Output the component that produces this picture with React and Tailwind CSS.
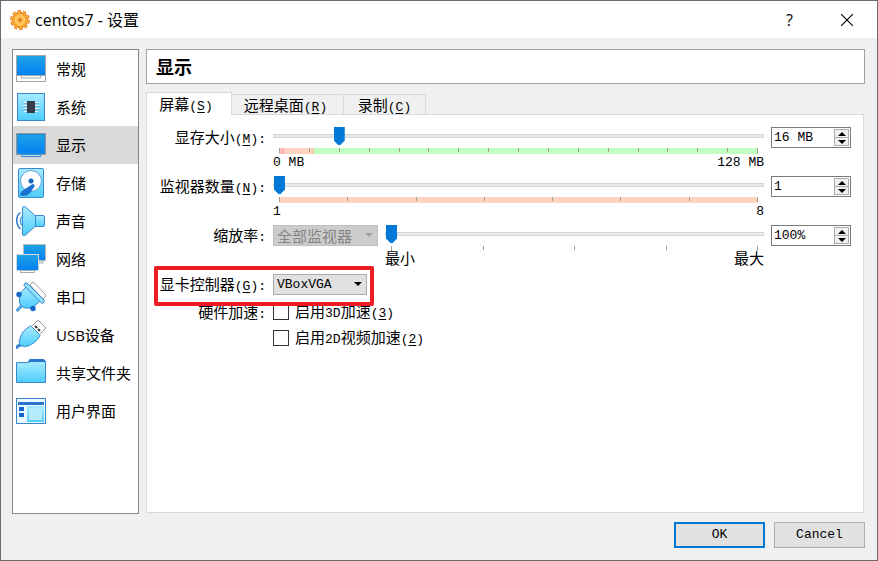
import React, { useState } from "react";

const stroke = "#3a86d0";

function IconFrame({ children }) {
  return (
    <svg viewBox="0 0 30 30" className="size-[30px] shrink-0" aria-hidden="true">
      <defs>
        <linearGradient id="screen" x1="0" y1="0" x2="0" y2="1">
          <stop offset="0" stopColor="#1ea3e2" />
          <stop offset="1" stopColor="#0280f6" />
        </linearGradient>
        <linearGradient id="sky" x1="0" y1="0" x2="0" y2="1">
          <stop offset="0" stopColor="#a8ebff" />
          <stop offset="1" stopColor="#4dcdfb" />
        </linearGradient>
      </defs>
      {children}
    </svg>
  );
}

function GeneralIcon() {
  return (
    <IconFrame>
      <rect x="0.5" y="1.5" width="29" height="26" fill="#fff" stroke="#a3a7ab" />
      <rect x="1" y="2" width="28" height="19" fill="url(#screen)" />
      <path d="M1 21.5h28" stroke="#a3a7ab" />
      <path d="M5.5 22v2h19v-2" fill="none" stroke="#a3a7ab" />
    </IconFrame>
  );
}

function SystemIcon() {
  return (
    <IconFrame>
      <rect x="1.5" y="1.5" width="27" height="27" fill="url(#sky)" stroke={stroke} />
      <path d="M8 10.5h14M7 13.5h16M7 16.5h16M8 19.5h14" stroke="#e5faff" />
      <path d="M8 11.5h14M7 14.5h16M7 17.5h16" stroke="#79aec8" />
      <rect x="11" y="9" width="8" height="12" fill="#373c48" />
    </IconFrame>
  );
}

function DisplayIcon() {
  return (
    <IconFrame>
      <rect x="0.5" y="3.5" width="29" height="21" fill="url(#screen)" stroke="#8c969f" />
      <rect x="1.5" y="4.5" width="27" height="19" fill="none" stroke="#1c8ee0" />
      <path d="M5.5 24.5v2h19v-2z" fill="#bde4fb" stroke={stroke} />
    </IconFrame>
  );
}

function StorageIcon() {
  return (
    <IconFrame>
      <rect x="2.5" y="0.5" width="25" height="29" rx="1.5" fill="url(#sky)" stroke={stroke} />
      <circle cx="15" cy="13" r="10.5" fill="#fff" stroke="#5aa0da" />
      <circle cx="15" cy="13" r="2.5" fill="#1467c0" />
      <path d="M17 16l1.500 2-4 6c-2 3-6 4-10 3 0-3 3-5 5-6z" fill="#1c6fcf" stroke="#1667c0" strokeWidth="0.6" />
    </IconFrame>
  );
}

function SoundIcon() {
  return (
    <IconFrame>
      <path d="M4.500 6.500C-0.500 10-0.500 18 4.500 23" fill="none" stroke="#2b78c8" strokeWidth="1.500" />
      <path d="M6.500 10c-3 2-3 8 0 10" fill="#a8e8ff" stroke="#2b78c8" />
      <path d="M19 9.500h8q1.500 0 1.500 1.500v8q0 1.500-1.500 1.500h-8z" fill="url(#sky)" stroke={stroke} />
      <path d="M6.500 28V2q0-2.500 3-1L19.500 10v10L9.500 29q-3 1.500-3-1z" fill="url(#sky)" stroke={stroke} />
    </IconFrame>
  );
}

function NetworkIcon() {
  return (
    <IconFrame>
      <rect x="7.5" y="0.5" width="22" height="16" fill="url(#screen)" stroke="#b5b9bc" />
      <path d="M22 17h5v2h-5z" fill="#fff" stroke="#a7abae" />
      <rect x="0.5" y="10.5" width="22" height="16" fill="url(#screen)" stroke="#d5d9dc" />
      <path d="M4.5 26.5v2h14v-2z" fill="#fff" stroke="#a7abae" />
    </IconFrame>
  );
}

function SerialIcon() {
  return (
    <IconFrame>
      <path d="M14 3l1.500-2q1.500-1 3 0l10.500 11q1 1.500 0 3l-2 2z" fill="#fff" stroke="#9a9a9a" />
      <path d="M0.500 29l6-6" stroke={stroke} strokeWidth="3" />
      <path d="M0.500 29l6-6" stroke="#8fdeff" />
      <path d="M10 5L3.500 12v8q0 2 2 4t4 2h7L25 18z" fill="url(#sky)" stroke={stroke} />
      <path d="M8 3.500q0-3 3-2.500l17 17q1 3-2 3.500z" fill="#8ee2fe" stroke={stroke} />
      <circle cx="3" cy="12.500" r="2.700" fill="#1467c8" />
      <circle cx="17" cy="26.500" r="2.700" fill="#1467c8" />
    </IconFrame>
  );
}

function UsbIcon() {
  return (
    <IconFrame>
      <path d="M15 7l6-6q1-1 2 0l6 6q1 1 0 2l-6 6z" fill="#fff" stroke="#8e9295" />
      <path d="M19 6l2 2M22 9l2 2" stroke="#333" strokeWidth="2" />
      <path d="M0.500 29q-0.500-3 4.500-4" fill="none" stroke={stroke} strokeWidth="3" />
      <path d="M13.500 6.500q1-1 2 0l8 8q1 1 0 2C21 21 17 24 12 26q-4 1.500-7-0.500-3-2-1-7 2-8 9.500-12z" fill="url(#sky)" stroke={stroke} />
    </IconFrame>
  );
}

function FolderIcon() {
  return (
    <IconFrame>
      <path d="M11 5l3-4h13l3 3v4H11z" fill="#2b74ce" />
      <path d="M0.500 4.500h11l2.500-1h15.500v21h-29z" fill="url(#sky)" stroke={stroke} />
      <path d="M12 4l2-3h13q2 0 2.500 3z" fill="#2b74ce" />
    </IconFrame>
  );
}

function InterfaceIcon() {
  return (
    <IconFrame>
      <rect x="0.500" y="2.500" width="29" height="25" fill="#eaf8ff" stroke={stroke} />
      <rect x="2" y="10" width="26" height="16" fill="url(#sky)" />
      <rect x="2" y="6" width="26" height="3" fill="#2b74ce" />
      <rect x="2" y="10" width="9" height="16" fill="#eaf8ff" />
      <path d="M3 11h5v4H3zM3 17h5v4H3z" fill="#1467d0" />
      <rect x="13" y="12" width="13" height="12" fill="#b6ebff" />
    </IconFrame>
  );
}

function GearIcon() {
  return (
    <svg viewBox="0 0 20 20" className="size-5" aria-hidden="true">
      <defs>
        <radialGradient id="gear">
          <stop offset="0" stopColor="#ffc655" />
          <stop offset="0.700" stopColor="#ffb53c" />
          <stop offset="1" stopColor="#f08a25" />
        </radialGradient>
      </defs>
      <circle cx="10" cy="10" r="8.700" fill="none" stroke="#e0701f" strokeWidth="2.400" strokeDasharray="3.400 2.066" />
      <circle cx="10" cy="10" r="7.800" fill="url(#gear)" stroke="#e57c22" strokeWidth="0.900" />
      <circle cx="10" cy="10" r="8.200" fill="none" stroke="#ffb53c" strokeWidth="1.800" strokeDasharray="2.400 2.752" strokeDashoffset="-0.400" />
      <circle cx="10" cy="10" r="4.500" fill="none" stroke="#ffd47c" />
      <circle cx="10" cy="10" r="1.700" fill="#c96f2c" />
    </svg>
  );
}

const categories = [
  ["常规", GeneralIcon],
  ["系统", SystemIcon],
  ["显示", DisplayIcon],
  ["存储", StorageIcon],
  ["声音", SoundIcon],
  ["网络", NetworkIcon],
  ["串口", SerialIcon],
  ["USB设备", UsbIcon],
  ["共享文件夹", FolderIcon],
  ["用户界面", InterfaceIcon],
];

function Mono({ children }) {
  return <span className="font-['Liberation_Mono',monospace] text-[13px]">{children}</span>;
}

function Key({ children }) {
  return (
    <Mono>
      (<span className="underline underline-offset-2">{children}</span>)
    </Mono>
  );
}

function Label({ htmlFor, text, hotkey }) {
  return (
    <label htmlFor={htmlFor} className="h-[22px] whitespace-nowrap text-right leading-5">
      {text}
      {hotkey && <Key>{hotkey}</Key>}
      <Mono>:</Mono>
    </label>
  );
}

function Slider({ id, label, min, max, initial, ticks, low, high, children }) {
  const [value, setValue] = useState(initial);
  return (
    <div className="min-w-0 flex-1">
      <input
        id={id}
        aria-label={label}
        type="range"
        min={min}
        max={max}
        value={value}
        onChange={(e) => setValue(e.target.value)}
        className="block h-[18px] w-full appearance-none bg-transparent [&::-webkit-slider-runnable-track]:h-1 [&::-webkit-slider-runnable-track]:border [&::-webkit-slider-runnable-track]:border-[#d6d6d6] [&::-webkit-slider-runnable-track]:bg-[#e7eaea] [&::-webkit-slider-thumb]:-mt-2 [&::-webkit-slider-thumb]:h-[18px] [&::-webkit-slider-thumb]:w-[11px] [&::-webkit-slider-thumb]:appearance-none [&::-webkit-slider-thumb]:bg-[#0078d7] [&::-webkit-slider-thumb]:[clip-path:polygon(0_0,100%_0,100%_75%,60%_100%,40%_100%,0_75%)]"
      />
      <div className="mx-[6px] mt-[3px] grid h-[6px]">
        <div className="col-start-1 row-start-1 flex">{children}</div>
        <div className="col-start-1 row-start-1 flex justify-between">
          {Array.from({ length: ticks }, (_, i) => (
            <span key={i} className="h-1 w-px bg-[#a0a090] first:h-[5px] last:h-[5px]" />
          ))}
        </div>
      </div>
      <div className="flex h-[15px] justify-between leading-[11px]">
        <span>{low}</span>
        <span>{high}</span>
      </div>
    </div>
  );
}

function SpinBox({ label, initial }) {
  const [value, setValue] = useState(initial);
  const step = (n) => setValue((v) => v.replace(/\d+/, (d) => String(Math.max(0, Number(d) + n))));
  return (
    <div className="flex h-[21px] border border-[#7a7a7a] bg-white">
      <input
        aria-label={label}
        value={value}
        onChange={(e) => setValue(e.target.value)}
        className="min-w-0 flex-1 pl-0.5 font-['Liberation_Mono',monospace] text-[13px] outline-none"
      />
      <div className="m-px flex w-[15px] flex-col border border-[#acacac] bg-[#f0f0f0]">
        <button type="button" aria-label={label + " +"} onClick={() => step(1)} className="flex flex-1 items-center justify-center border-b border-[#acacac]">
          <svg viewBox="0 0 8 4" className="h-1 w-2"><path d="M4 0l4 4H0z" /></svg>
        </button>
        <button type="button" aria-label={label + " -"} onClick={() => step(-1)} className="flex flex-1 items-center justify-center">
          <svg viewBox="0 0 8 4" className="h-1 w-2"><path d="M4 4L0 0h8z" /></svg>
        </button>
      </div>
    </div>
  );
}

function CheckBox({ children }) {
  return (
    <label className="flex h-4 items-center gap-[6px]">
      <input type="checkbox" className="size-4 appearance-none border border-[#333] bg-white checked:bg-[#0078d7]" />
      <span className="whitespace-nowrap leading-4">{children}</span>
    </label>
  );
}

export default function App() {
  const [active, setActive] = useState("显示");
  return (
    <div className="flex h-screen flex-col border border-[#6b6b6b] bg-[#f0f0f0] font-['Noto_Sans_CJK_SC',sans-serif] text-[15px] text-black">
      <header className="flex h-[37px] shrink-0 items-center bg-white pl-[9px] pr-6">
        <GearIcon />
        <h1 className="ml-[5px] flex-1 font-['Open_Sans','Noto_Sans_CJK_SC',sans-serif] text-[16px]">centos7 - 设置</h1>
        <button type="button" className="mr-12 font-['Open_Sans',sans-serif] text-[16px]">?</button>
        <button type="button" aria-label="Close">
          <svg viewBox="0 0 12 12" className="size-3" stroke="#000" strokeWidth="1.200"><path d="M0 0l12 12M12 0L0 12" /></svg>
        </button>
      </header>

      <div className="flex min-h-0 flex-1 gap-[7px] pl-[11px] pr-3 pt-[11px]">
        <nav className="mb-[-1px] w-[127px] shrink-0 border border-[#828790] bg-white font-['Open_Sans','Noto_Sans_CJK_SC',sans-serif]">
          {categories.map(([name, Icon]) => (
            <button
              key={name}
              type="button"
              onClick={() => setActive(name)}
              className={"flex h-[38px] w-full items-center gap-[10px] pl-[3px] " + (active === name ? "bg-[#d9d9d9]" : "")}
            >
              <Icon />
              <span className="whitespace-nowrap">{name}</span>
            </button>
          ))}
        </nav>

        <main className="flex min-w-0 flex-1 flex-col">
          <h2 className="flex h-[35px] shrink-0 items-center border border-[#a0a0a0] bg-white pl-[9px] text-[18px] font-bold">显示</h2>
          <div role="tablist" className="mt-2 flex h-[22px] shrink-0 items-end">
            <button type="button" role="tab" aria-selected="true" className="relative z-10 -mb-px h-[23px] w-[86px] border border-b-0 border-[#d9d9d9] bg-white pr-[6px] leading-[22px]">
              屏幕<Key>S</Key>
            </button>
            <button type="button" role="tab" aria-selected="false" className="h-5 w-[112px] border border-b-0 border-l-0 border-[#d9d9d9] pr-1 leading-5">
              远程桌面<Key>R</Key>
            </button>
            <button type="button" role="tab" aria-selected="false" className="h-5 w-[82px] border border-b-0 border-l-0 border-[#d9d9d9] leading-5">
              录制<Key>C</Key>
            </button>
          </div>

          <section role="tabpanel" className="mr-px flex-1 border border-[#d9d9d9] bg-white pl-px pr-3 pt-3">
            <div className="grid grid-cols-[118px_minmax(0,1fr)_80px] gap-[7px]">
              <Label htmlFor="vram" text="显存大小" hotkey="M" />
              <Slider id="vram" label="显存大小" min={0} max={128} initial={16} ticks={17} low={<Mono>0 MB</Mono>} high={<Mono>128 MB</Mono>}>
                <span className="w-[5px] border-r border-[#ff9c9c] bg-[#ffc0c0]" />
                <span className="w-[30px] border-r border-[#e0c08c] bg-[#ffd3c0]" />
                <span className="flex-1 bg-[#c0ffc0]" />
              </Slider>
              <SpinBox label="显存大小" initial="16 MB" />

              <Label htmlFor="monitors" text="监视器数量" hotkey="N" />
              <Slider id="monitors" label="监视器数量" min={1} max={8} initial={1} ticks={8} low={<Mono>1</Mono>} high={<Mono>8</Mono>}>
                <span className="flex-1 bg-[#ffd3c0]" />
              </Slider>
              <SpinBox label="监视器数量" initial="1" />

              <Label htmlFor="scale-target" text="缩放率" />
              <div className="flex gap-[7px]">
                <div className="relative h-[21px] w-[105px] shrink-0">
                  <select id="scale-target" disabled className="block h-full w-full appearance-none border border-[#bfbfbf] bg-[#ccc] pl-[3px] leading-[19px] text-[#838383] opacity-100">
                    <option>全部监视器</option>
                  </select>
                  <svg viewBox="0 0 8 4" className="pointer-events-none absolute right-[5px] top-2 h-1 w-2" fill="#a0a0a0"><path d="M0 0h8L4 4z" /></svg>
                </div>
                <Slider id="scale" label="缩放率" min={100} max={200} initial={100} ticks={5} low="最小" high="最大" />
              </div>
              <SpinBox label="缩放率" initial="100%" />
            </div>

            <div className="mt-[7px] grid grid-cols-[118px_1fr] gap-x-[7px]">
              <div className="relative col-span-2 grid grid-cols-subgrid">
                <Label htmlFor="controller" text="显卡控制器" hotkey="G" />
                <div className="relative h-[21px] w-[94px]">
                  <select id="controller" className="block h-full w-full appearance-none border border-[#acacac] bg-[#e1e1e1] pl-[3px] font-['Liberation_Mono',monospace] text-[13px]">
                    <option>VBoxVGA</option>
                    <option>VMSVGA</option>
                    <option>VBoxSVGA</option>
                  </select>
                  <svg viewBox="0 0 8 4" className="pointer-events-none absolute right-[5px] top-2 h-1 w-2"><path d="M0 0h8L4 4z" /></svg>
                </div>
                <div className="pointer-events-none absolute -top-2 left-[6px] h-10 w-[220px] rounded-xs border-4 border-[#ed1c24]" />
              </div>
              <span className="mt-[5px] h-[22px] text-right leading-[22px]">硬件加速<Mono>:</Mono></span>
              <div className="mt-2 flex flex-col gap-[10px]">
                <CheckBox>启用<Mono>3D</Mono>加速<Key>3</Key></CheckBox>
                <CheckBox>启用<Mono>2D</Mono>视频加速<Key>2</Key></CheckBox>
              </div>
            </div>
          </section>
        </main>
      </div>

      <footer className="flex h-[47px] shrink-0 justify-end gap-[9px] pr-3 pt-[9px] font-['Liberation_Mono',monospace] text-[13px]">
        <button type="button" className="h-[26px] w-[91px] border-2 border-[#0078d7] bg-[#e1e1e1]">OK</button>
        <button type="button" className="h-[26px] w-[91px] border border-[#adadad] bg-[#e1e1e1]">Cancel</button>
      </footer>
    </div>
  );
}
